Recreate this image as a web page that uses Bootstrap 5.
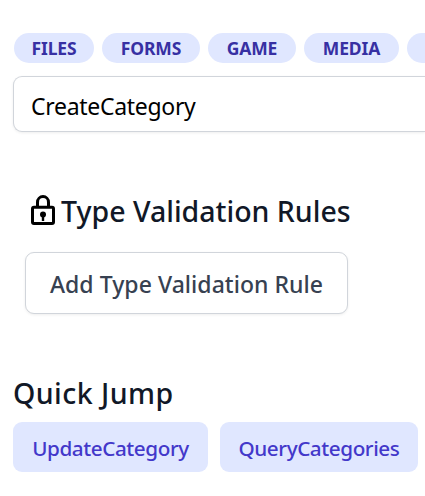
<!DOCTYPE html>
<html lang="en">
<head>
<meta charset="utf-8">
<meta name="viewport" content="width=device-width, initial-scale=1">
<title>CreateCategory</title>
<link rel="stylesheet" href="https://cdn.jsdelivr.net/npm/bootstrap@5.3.0/dist/css/bootstrap.min.css">
<style>
body{font-family:"Noto Sans","Open Sans",sans-serif;color:#111827;background:#fff;height:496px}
.page{padding:33px 0 0 13px;overflow:hidden}
.tags{gap:8px;margin-left:1px}
.tag{flex:none;height:30px;background:#e0e7ff;color:#3730a3;font-size:17.5px;font-weight:700;line-height:31px;letter-spacing:-.15px;padding:0;text-align:center}
.w-files{width:80px}.w-forms{width:98px}.w-game{width:88px}.w-media{width:95px}
.tag.w-more{display:block;width:18px;border-radius:15px 0 0 15px}
.name-field{height:56px;margin-top:13px;padding:4px 17px 0;border:1px solid #d1d5db;border-right:0;border-radius:9px 0 0 9px;font-size:23px;color:#000;letter-spacing:-.3px;box-shadow:0 1px 3px rgba(0,0,0,.07)}
.name-field:focus{border-color:#d1d5db}
.rules{margin:60px 0 0 12px}
.rules-title{height:40px;margin:0;padding-left:6px}
.title-text{font-size:28.5px;font-weight:500;line-height:38px;height:40px;white-space:nowrap;margin:0}
.btn-rule{width:323px;height:62px;margin-top:20px;padding:2px 0 0;border:1px solid #d1d5db;border-radius:9px;background:#fff;color:#374151;font-size:23px;font-weight:500;white-space:nowrap;letter-spacing:.04px;box-shadow:0 1px 3px rgba(0,0,0,.07)}
.jump{margin-top:60px}
.jump-title{letter-spacing:.45px}
.jump-links{gap:12px;margin-top:8px}
.btn-jump{height:50px;padding:3px 0 0;border:0;border-radius:9px;background:#e0e7ff;color:#4338ca;font-size:20.7px;font-weight:500;letter-spacing:-.42px}
.w-update{width:195px}.w-query{width:198px}
</style>
<script src="https://cdn.jsdelivr.net/npm/bootstrap@5.3.0/dist/js/bootstrap.bundle.min.js" defer></script>
</head>
<body>
<main class="page">
  <div class="tags d-flex">
    <span class="tag badge rounded-pill w-files">FILES</span>
    <span class="tag badge rounded-pill w-forms">FORMS</span>
    <span class="tag badge rounded-pill w-game">GAME</span>
    <span class="tag badge rounded-pill w-media">MEDIA</span>
    <span class="tag badge w-more"></span>
  </div>
  <input class="name-field form-control" type="text" value="CreateCategory" aria-label="Type name">
  <section class="rules">
    <div class="rules-title d-flex">
      <svg class="flex-shrink-0" width="30" height="40" viewBox="0 0 30 40" fill="none" stroke="#000" stroke-width="3" aria-hidden="true">
        <rect x="1.5" y="15.3" width="21" height="16.2" rx="1.5"/>
        <path d="M6.5 15V10.2a5.5 5.7 0 0 1 11 0V15"/>
        <circle cx="12" cy="22.6" r="3" fill="#000" stroke="none"/>
        <path d="M12 23v6" stroke-width="2.4"/>
      </svg>
      <h2 class="title-text">Type Validation Rules</h2>
    </div>
    <button class="btn btn-rule" type="button">Add Type Validation Rule</button>
  </section>
  <section class="jump">
    <h2 class="title-text jump-title">Quick Jump</h2>
    <div class="jump-links d-flex">
      <button class="btn btn-jump w-update" type="button">UpdateCategory</button>
      <button class="btn btn-jump w-query" type="button">QueryCategories</button>
    </div>
  </section>
</main>
</body>
</html>
